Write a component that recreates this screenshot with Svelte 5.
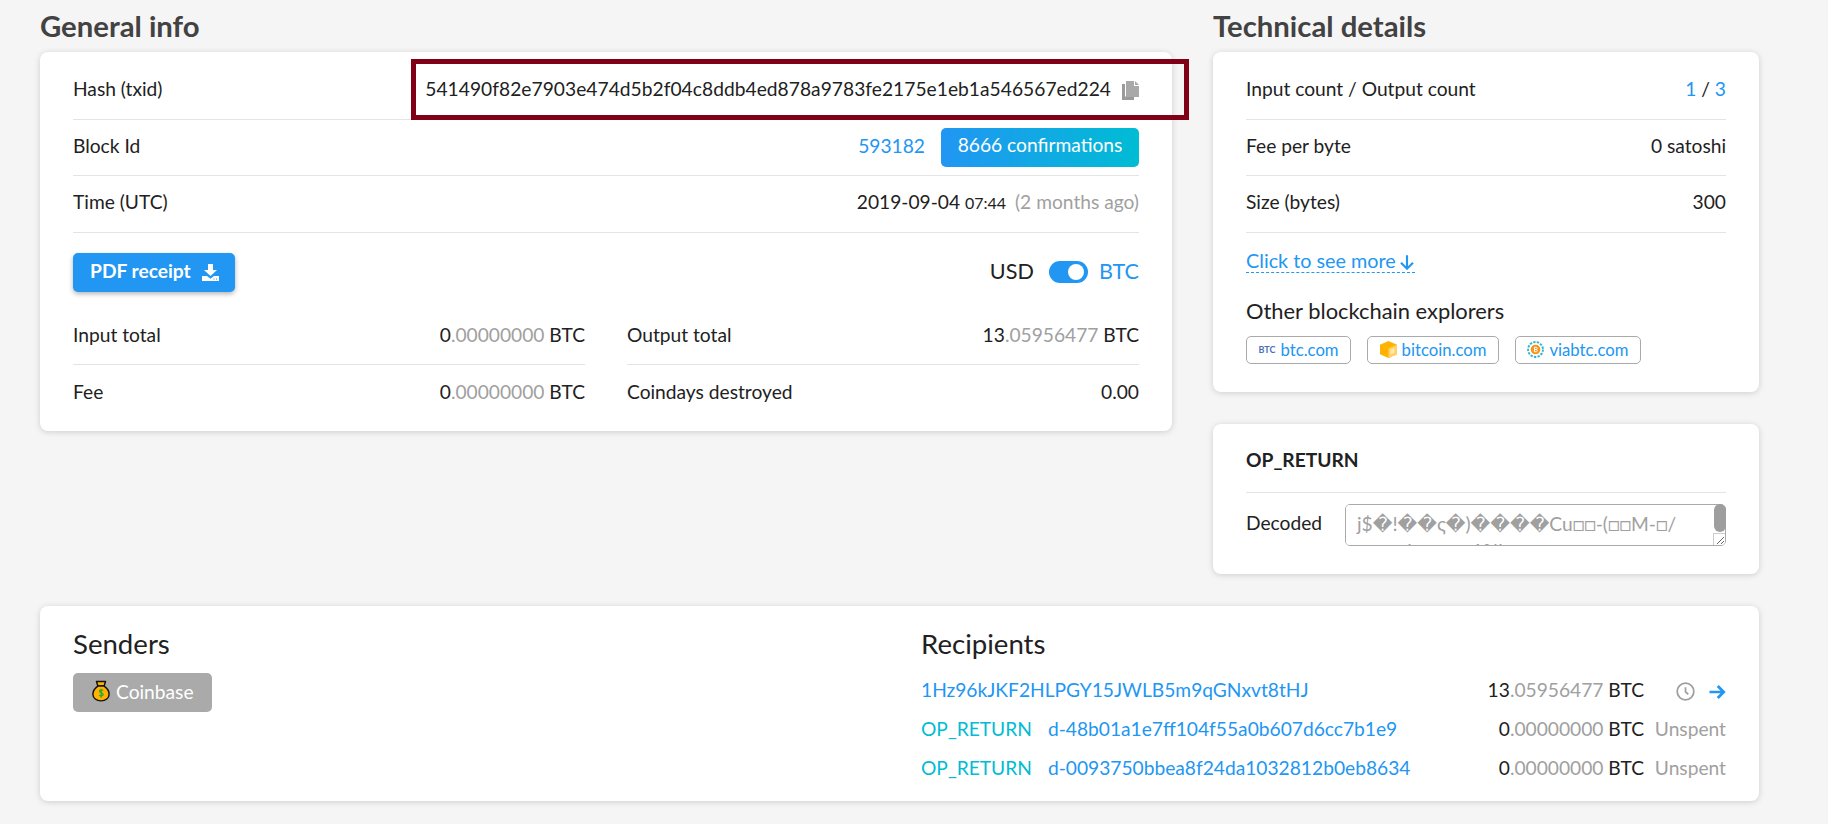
<script lang="ts">
  const hash = '541490f82e7903e474d5b2f04c8ddb4ed878a9783fe2175e1eb1a546567ed224';
  const techRows = [
    { label: 'Fee per byte', value: '0 satoshi' },
    { label: 'Size (bytes)', value: '300' }
  ];
  const opReturns = [
    { address: 'd-48b01a1e7ff104f55a0b607d6cc7b1e9' },
    { address: 'd-0093750bbea8f24da1032812b0eb8634' }
  ];
  const decoded = 'j$\uFFFD!\uFFFD\uFFFD\u03C2\uFFFD)\uFFFD\uFFFD\uFFFD\uFFFDCu\u25A1\u25A1-(\u25A1\u25A1M-\u25A1/\naa t a l a t a a 1%l a t a a t';
</script>

{#snippet amount(whole, fraction)}
  <span class="amount">{whole}<span class="muted">.{fraction}</span> BTC</span>
{/snippet}

<div class="page">
  <div class="top">
    <section>
      <h2>General info</h2>
      <div class="card general">
        <div class="row">
          <span>Hash (txid)</span>
          <span class="hash">
            {hash}
            <svg class="copy" viewBox="0 0 17 19" aria-hidden="true">
              <path fill="#9a9a9a" d="M0 3h3v12.500h9V19H0z" />
              <path fill="#a8a8a8" d="M4 0h8v5h5v11H4z" />
              <path fill="#a8a8a8" d="M13 0l4 4h-4z" />
            </svg>
          </span>
        </div>
        <div class="row">
          <span>Block Id</span>
          <span class="block">
            <a href="#block">593182</a>
            <span class="confirmations">8666 confirmations</span>
          </span>
        </div>
        <div class="row">
          <span>Time (UTC)</span>
          <span>2019-09-04 <small>07:44</small> <span class="muted ago">(2 months ago)</span></span>
        </div>
        <div class="actions">
          <button type="button" class="pdf">
            PDF receipt
            <svg viewBox="0 0 17 17" aria-hidden="true">
              <path fill="#fff" d="M6 0h5v6h4l-6.500 6L2 6h4z" />
              <path fill="#fff" d="M0 12h5l3.500 2.800L12 12h5v5H0z" />
              <path fill="#2196f3" d="M11.500 14.500h1v1h-1zM14 14.500h1v1h-1z" />
            </svg>
          </button>
          <div class="currency">
            <span>USD</span>
            <span class="toggle"><span class="knob"></span></span>
            <span class="link">BTC</span>
          </div>
        </div>
        <div class="totals">
          <div class="row"><span>Input total</span>{@render amount('0', '00000000')}</div>
          <div class="row"><span>Output total</span>{@render amount('13', '05956477')}</div>
          <div class="row last"><span>Fee</span>{@render amount('0', '00000000')}</div>
          <div class="row last"><span>Coindays destroyed</span><span>0.00</span></div>
        </div>
      </div>
    </section>

    <section>
      <h2>Technical details</h2>
      <div class="card tech">
        <div class="row">
          <span>Input count / Output count</span>
          <span><a href="#in">1</a> / <a href="#out">3</a></span>
        </div>
        {#each techRows as r}
          <div class="row"><span>{r.label}</span><span>{r.value}</span></div>
        {/each}
        <a class="more" href="#more">
          Click to see more
          <svg viewBox="0 0 24 24" aria-hidden="true"><path d="M12 2v20M3 13l9 9 9-9" /></svg>
        </a>
        <h3>Other blockchain explorers</h3>
        <div class="explorers">
          <a class="chip" href="#btc"><span class="btc-logo">BTC</span>btc.com</a>
          <a class="chip" href="#bitcoin">
            <svg viewBox="0 0 16 16" aria-hidden="true">
              <path fill="#ffb300" d="M8 0l8 3.500v9L8 16l-8-3.500v-9z" />
              <path fill="#ffd166" d="M8 7l8-3.500v9L8 16z" />
              <path fill="#ffe9b0" d="M10 8.200l3.500-1.600v4.400L10 12.600z" />
            </svg>
            bitcoin.com
          </a>
          <a class="chip" href="#viabtc">
            <svg viewBox="0 0 16 16" aria-hidden="true">
              <circle cx="8" cy="8" r="7" fill="none" stroke="#26b8cf" stroke-width="1.800" stroke-dasharray="2.200 1.200" />
              <circle cx="8" cy="8" r="4.500" fill="#f7931a" />
              <path d="M7 5.600v4.800M7 5.900h1.600a1 1 0 0 1 0 2.100H7M7 8h1.900a1.100 1.100 0 0 1 0 2.100H7" fill="none" stroke="#fff" stroke-width="0.900" />
            </svg>
            viabtc.com
          </a>
        </div>
      </div>

      <div class="card op">
        <h4>OP_RETURN</h4>
        <div class="decoded">
          <span>Decoded</span>
          <div class="field">
            <textarea readonly value={decoded}></textarea>
            <span class="thumb"></span>
            <span class="corner"></span>
          </div>
        </div>
      </div>
    </section>
  </div>

  <div class="card parties">
    <div class="senders">
      <h3 class="big">Senders</h3>
      <span class="coinbase">
        <svg viewBox="0 0 20 24" aria-hidden="true">
          <path d="M5 1.500h10l-1.500 5h-7z" fill="#ffb300" stroke="#111" stroke-width="1.600" stroke-linejoin="round" />
          <path d="M6.500 6.500h7C17 9 19 12 19 15.500c0 4.500-4 7.500-9 7.500s-9-3-9-7.500C1 12 3 9 6.500 6.500z" fill="#ffb300" stroke="#111" stroke-width="1.600" />
          <path d="M12.300 11.500c-.6-1-3.900-1.200-4 .8-.1 2.200 4.200 1.300 4.100 3.600-.1 2-3.700 1.800-4.500.6M10.200 9.500v10" fill="none" stroke="#2fa82f" stroke-width="1.500" />
        </svg>
        Coinbase
      </span>
    </div>
    <div class="recipients">
      <h3 class="big">Recipients</h3>
      <div class="recipient">
        <a class="address" href="#addr">1Hz96kJKF2HLPGY15JWLB5m9qGNxvt8tHJ</a>
        {@render amount('13', '05956477')}
        <span class="status icons">
          <svg class="clock" viewBox="0 0 24 24" aria-hidden="true"><circle cx="12" cy="12" r="10.500" /><path d="M12 6.500V12.500l3.500 3" /></svg>
          <svg class="arrow" viewBox="0 0 24 24" aria-hidden="true"><path d="M2 12h19M13 4l8 8-8 8" /></svg>
        </span>
      </div>
      {#each opReturns as o}
        <div class="recipient">
          <span class="address"><span class="op-label">OP_RETURN</span><a href="#data">{o.address}</a></span>
          {@render amount('0', '00000000')}
          <span class="status muted">Unspent</span>
        </div>
      {/each}
    </div>
  </div>

  <div class="highlight"></div>
</div>

<style>
  :global(body) {
    background: #f5f5f5;
    color: #212121;
    font-family: Lato, 'Open Sans', sans-serif;
    font-size: 19.2px;
  }

  .page {
    position: relative;
    width: 1719px;
    margin-left: 40px;
    box-sizing: border-box;
    padding-bottom: 23px;
  }

  .top {
    display: grid;
    grid-template-columns: 1132px 546px;
    column-gap: 41px;
    margin-bottom: 32px;
  }

  h2 {
    margin: 0;
    height: 52px;
    line-height: 52px;
    font-size: 29.300px;
    font-weight: 700;
    color: #424242;
  }

  .card {
    background: #fff;
    border-radius: 8px;
    box-shadow: 0 1px 6px rgba(0, 0, 0, 0.16);
    box-sizing: border-box;
  }

  .row {
    display: flex;
    justify-content: space-between;
    align-items: center;
    height: 56.500px;
    border-bottom: 1px solid #e4e4e4;
    box-sizing: border-box;
  }

  /* text sits a little above the middle of its row */
  .row > * {
    margin-bottom: 4px;
  }

  .row > .block {
    margin-bottom: 0;
  }

  .row.last {
    border-bottom: none;
  }

  .muted {
    color: #a0a0a0;
  }

  a, .link {
    color: #2196f3;
    text-decoration: none;
  }

  .general {
    height: 379px;
    padding: 11px 33px;
  }

  .hash {
    display: flex;
    align-items: center;
    gap: 11px;
    letter-spacing: 0.035px;
  }

  .copy {
    width: 17px;
    height: 19px;
    margin-top: 4px;
  }

  .block {
    display: flex;
    align-items: center;
    gap: 16px;
  }

  .block a {
    margin-bottom: 4px;
  }

  .confirmations {
    width: 198px;
    height: 39px;
    line-height: 34px;
    text-align: center;
    color: #fff;
    border-radius: 5px;
    background: linear-gradient(90deg, #2196f3, #00bcd4);
  }

  small {
    font-size: 16px;
  }

  .ago {
    margin-left: 4px;
  }

  .actions {
    display: flex;
    justify-content: space-between;
    align-items: center;
    padding-top: 20px;
  }

  .pdf {
    display: flex;
    align-items: center;
    gap: 11px;
    height: 39px;
    padding: 0 16px 4px 17px;
    border: none;
    border-radius: 5px;
    background: #2196f3;
    color: #fff;
    font: 700 19.200px Lato, sans-serif;
    box-shadow: 0 2px 5px rgba(0, 0, 0, 0.3);
  }

  .pdf svg {
    width: 17px;
    height: 17px;
    margin-top: 4px;
  }

  .currency {
    display: flex;
    align-items: center;
    font-size: 21.600px;
    margin-bottom: 3px;
  }

  .toggle {
    display: flex;
    align-items: center;
    justify-content: flex-end;
    width: 39px;
    height: 22px;
    margin: 2px 11px 0 15px;
    padding: 0 4px;
    box-sizing: border-box;
    border-radius: 11px;
    background: #2196f3;
  }

  .knob {
    width: 16px;
    height: 16px;
    border-radius: 50%;
    background: #fff;
  }

  .totals {
    display: grid;
    grid-template-columns: 512px 512px;
    column-gap: 42px;
    margin-top: 17px;
  }

  .tech {
    height: 340px;
    padding: 11px 33px;
  }

  .more {
    display: inline-flex;
    align-items: center;
    gap: 3px;
    margin-top: 16px;
    height: 23px;
    font-size: 19.800px;
    border-bottom: 1px dashed #2196f3;
  }

  .more svg {
    width: 16px;
    height: 16px;
    margin-top: 3px;
    fill: none;
    stroke: #2196f3;
    stroke-width: 3.200;
  }

  h3 {
    margin: 24px 0 0;
    font-size: 21.900px;
    font-weight: 400;
    line-height: 28px;
  }

  .explorers {
    display: flex;
    gap: 16px;
    margin-top: 11px;
  }

  .chip {
    display: flex;
    align-items: center;
    gap: 5px;
    height: 28px;
    padding: 0 11.500px;
    border: 1px solid #aaa;
    border-radius: 5px;
    font-size: 16.700px;
    box-sizing: border-box;
  }

  .chip svg {
    width: 17px;
    height: 17px;
  }

  .btc-logo {
    font-size: 9px;
    font-weight: 700;
    color: #4a6fb5;
  }

  .op {
    margin-top: 32px;
    height: 150px;
    padding: 0 33px;
  }

  h4 {
    margin: 0;
    height: 68px;
    line-height: 71px;
    font-size: 19.200px;
    font-weight: 700;
    border-bottom: 1px solid #e4e4e4;
  }

  .decoded {
    display: flex;
    align-items: center;
    justify-content: space-between;
    margin-top: 11px;
  }

  .decoded > span {
    margin-bottom: 6px;
  }

  .field {
    position: relative;
    display: flex;
    width: 381px;
    height: 42px;
  }

  textarea {
    width: 100%;
    height: 100%;
    padding: 4.500px 11px;
    box-sizing: border-box;
    border: 1px solid #aaa;
    border-radius: 5px;
    color: #a0a0a0;
    font: 19.200px/27px Lato, 'DejaVu Sans', sans-serif;
    overflow-y: scroll;
    outline: none;
  }

  .thumb {
    position: absolute;
    top: 0;
    right: 0;
    width: 12px;
    height: 28px;
    border-radius: 6px;
    background: #9e9e9e;
  }

  .corner {
    position: absolute;
    right: 1px;
    bottom: 1px;
    width: 11px;
    height: 11px;
    border-left: 1px solid #ccc;
    border-top: 1px solid #ccc;
    pointer-events: none;
  }

  .parties {
    display: grid;
    grid-template-columns: 848px 1fr;
    height: 195px;
    padding: 0 33px;
  }

  .big {
    margin: 22px 0 0;
    height: 32px;
    font-size: 27.600px;
    line-height: 32px;
  }

  .coinbase {
    display: inline-flex;
    align-items: center;
    gap: 6px;
    height: 39px;
    margin-top: 13px;
    padding: 0 18px 3px 19px;
    box-sizing: border-box;
    border-radius: 5px;
    background: #aaa;
    color: #fff;
  }

  .coinbase svg {
    width: 18px;
    height: 22px;
  }

  .recipients .big {
    margin-bottom: 10px;
  }

  .recipient {
    display: grid;
    grid-template-columns: 1fr auto 82px;
    align-items: center;
    height: 39px;
  }

  .op-label {
    color: #00bcd4;
    margin-right: 16px;
  }

  .status {
    display: flex;
    justify-content: flex-end;
    align-items: center;
    gap: 13px;
  }

  .status.icons {
    margin-top: 4px;
  }

  .clock {
    width: 19px;
    height: 19px;
    fill: none;
    stroke: #9e9e9e;
    stroke-width: 2.200;
  }

  .arrow {
    width: 18px;
    height: 18px;
    fill: none;
    stroke: #2196f3;
    stroke-width: 3.600;
  }

  .highlight {
    position: absolute;
    left: 371px;
    top: 59px;
    width: 778px;
    height: 61px;
    box-sizing: border-box;
    border: 5px solid #800018;
    pointer-events: none;
  }
</style>
